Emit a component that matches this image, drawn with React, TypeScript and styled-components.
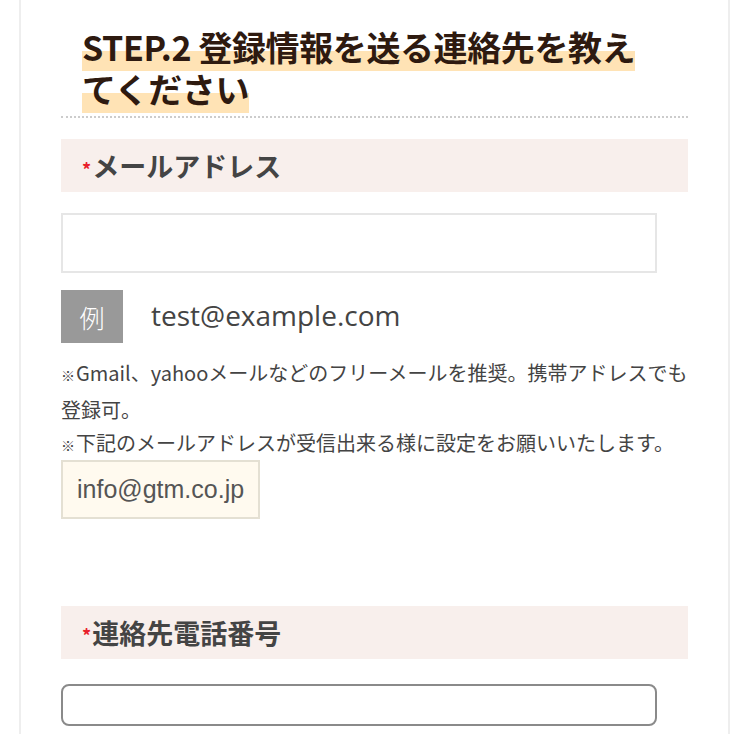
import styled, { createGlobalStyle } from "styled-components";

const GlobalStyle = createGlobalStyle`
  html, body {
    margin: 0;
    padding: 0;
    background: #fff;
  }
  body {
    font-family: "Noto Sans CJK JP", "Noto Sans", sans-serif;
    color: #444;
  }
`;

const Page = styled.div`
  margin: 0 19px;
  min-height: 734px;
  padding: 0 40px;
  border-left: 2px solid #eeeeee;
  border-right: 2px solid #eeeeee;
  box-sizing: border-box;
`;

const Title = styled.h2`
  margin: 0;
  padding: 26px 46px 6px 21px;
  font-size: 34px;
  line-height: 42px;
  font-weight: 700;
  letter-spacing: -0.4px;
  color: #2e1a10;
  border-bottom: 2px dotted #cccccc;
`;

const Marker = styled.span`
  background: linear-gradient(transparent 60%, #ffe3b5 60%);
`;

const FieldHead = styled.div<{ $gap?: number }>`
  margin-top: ${(p) => p.$gap ?? 21}px;
  height: 53px;
  padding: 0 21px;
  display: flex;
  align-items: center;
  background: #f8efec;
  font-size: 27px;
  font-weight: 700;
  color: #444;
`;

const Required = styled.span`
  color: #e8202a;
  font-size: 18px;
  margin-right: 1px;
  position: relative;
  top: 3px;
`;

const TextBox = styled.input<{ $rounded?: boolean }>`
  display: block;
  width: 95%;
  box-sizing: border-box;
  margin-top: ${(p) => (p.$rounded ? 25 : 21)}px;
  height: ${(p) => (p.$rounded ? 42 : 60)}px;
  border: 2px solid ${(p) => (p.$rounded ? "#8a8a8a" : "#e6e6e6")};
  border-radius: ${(p) => (p.$rounded ? 8 : 0)}px;
  background: #fff;
  font-size: 20px;
  padding: 0 12px;
  outline: none;
`;

const ExampleRow = styled.div`
  margin-top: 17px;
  display: flex;
  align-items: center;
  gap: 28px;
`;

const ExampleTag = styled.span`
  width: 62px;
  height: 53px;
  display: flex;
  align-items: center;
  justify-content: center;
  background: #999999;
  color: #fff;
  font-size: 25px;
  font-weight: 300;
`;

const ExampleText = styled.span`
  font-family: "Open Sans", "Noto Sans", sans-serif;
  font-size: 28px;
  color: #444;
  position: relative;
  top: -2px;
`;

const Notes = styled.p`
  margin: 13px 0 0;
  font-size: 20px;
  line-height: 33.5px;
  color: #444;
`;

const Mark = styled.span`
  font-size: 14px;
  margin-right: 1px;
`;

const Address = styled.div`
  display: flex;
  width: fit-content;
  align-items: center;
  height: 59px;
  margin-top: -3px;
  box-sizing: border-box;
  padding: 0 14px;
  background: #fffaef;
  border: 2px solid #e4e0d3;
  font-family: "Liberation Sans", Arial, sans-serif;
  font-size: 25px;
  color: #555;
`;

export default function App() {
  return (
    <>
      <GlobalStyle />
      <Page>
        <Title>
          <Marker>STEP.2 登録情報を送る連絡先を教えてください</Marker>
        </Title>

        <FieldHead>
          <Required>*</Required>メールアドレス
        </FieldHead>
        <TextBox type="email" />
        <ExampleRow>
          <ExampleTag>例</ExampleTag>
          <ExampleText>test@example.com</ExampleText>
        </ExampleRow>
        <Notes>
          <Mark>※</Mark>Gmail、yahooメールなどのフリーメールを推奨。携帯アドレスでも登録可。
          <br />
          <Mark>※</Mark>下記のメールアドレスが受信出来る様に設定をお願いいたします。
        </Notes>
        <Address>info@gtm.co.jp</Address>

        <FieldHead $gap={87}>
          <Required>*</Required>連絡先電話番号
        </FieldHead>
        <TextBox type="tel" $rounded />
      </Page>
    </>
  );
}
